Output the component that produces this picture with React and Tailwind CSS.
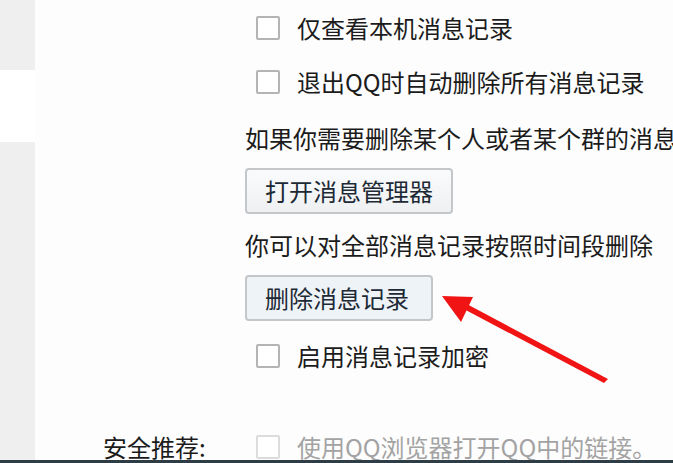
import React from "react";

const font = { fontFamily: '"Noto Sans CJK SC", "Noto Sans", sans-serif' };

// Plain square checkbox, unchecked.
const Box = ({ faded }) => (
  <span
    className={`inline-block shrink-0 w-[24px] h-[24px] rounded-[2px] bg-white border-2 ${
      faded ? "border-[#dcdcdc]" : "border-[#b4b4b4]"
    }`}
  />
);

const CheckRow = ({ label, faded, className = "" }) => (
  <div className={`h-[46px] flex items-center pl-[11px] ${className}`}>
    <Box faded={faded} />
    <span className={`ml-[17px] whitespace-nowrap ${faded ? "text-[#a3a3a3]" : "text-[#1b1b1b]"}`}>{label}</span>
  </div>
);

const Button = ({ children, hover, width }) => (
  <button
    className={`h-[46px] ${width} rounded-[4px] border-2 border-[#c4c7ca] text-[#1d2a36] text-left pl-[18px] ${
      hover ? "bg-[#edf3f6]" : "bg-gradient-to-b from-[#fafbfc] to-[#eef0f2]"
    }`}
  >
    {children}
  </button>
);

export default function App() {
  return (
    <div className="relative w-[673px] h-[463px] overflow-hidden bg-white flex flex-col text-[24px] leading-none" style={font}>
      <div className="flex-1 flex min-h-0">
        {/* left nav strip */}
        <div className="w-[35px] shrink-0 flex flex-col">
          <div className="h-[70px] bg-[#efefef]" />
          <div className="h-[72px] bg-white" />
          <div className="flex-1 bg-[#efefef]" />
        </div>

        <div className="flex-1 min-w-0 overflow-hidden flex flex-col bg-[#fdfdfd] pt-[5px]">
          <div className="pl-[210px] flex flex-col items-start">
            <CheckRow label="仅查看本机消息记录" />
            <CheckRow label="退出QQ时自动删除所有消息记录" className="mt-[8px]" />
            <div className="h-[46px] mt-[10px] flex items-center whitespace-nowrap text-[#1b1b1b]">
              如果你需要删除某个人或者某个群的消息记录
            </div>
            <div className="mt-[7px]">
              <Button width="w-[208px]">打开消息管理器</Button>
            </div>
            <div className="h-[46px] mt-[8px] flex items-center whitespace-nowrap text-[#1b1b1b]">
              你可以对全部消息记录按照时间段删除
            </div>
            <div className="mt-[7px]">
              <Button hover width="w-[188px]">删除消息记录</Button>
            </div>
            <CheckRow label="启用消息记录加密" className="mt-[12px]" />
          </div>

          <div className="mt-[45px] flex items-center h-[46px]">
            <div className="w-[210px] shrink-0 pl-[68px] text-[#1b1b1b] whitespace-nowrap">安全推荐:</div>
            <CheckRow label="使用QQ浏览器打开QQ中的链接。" faded />
          </div>
        </div>
      </div>
      <div className="h-[3px] bg-[#2e3d45]" />

      {/* red annotation arrow */}
      <svg className="absolute left-0 top-0 pointer-events-none" width="673" height="463" viewBox="0 0 673 463">
        <path d="M604 383 L608 379 L463 302 L460 307 Z" fill="#f01414" />
        <path d="M442 296 L473 297 L461 322 Z" fill="#f01414" />
      </svg>
    </div>
  );
}
